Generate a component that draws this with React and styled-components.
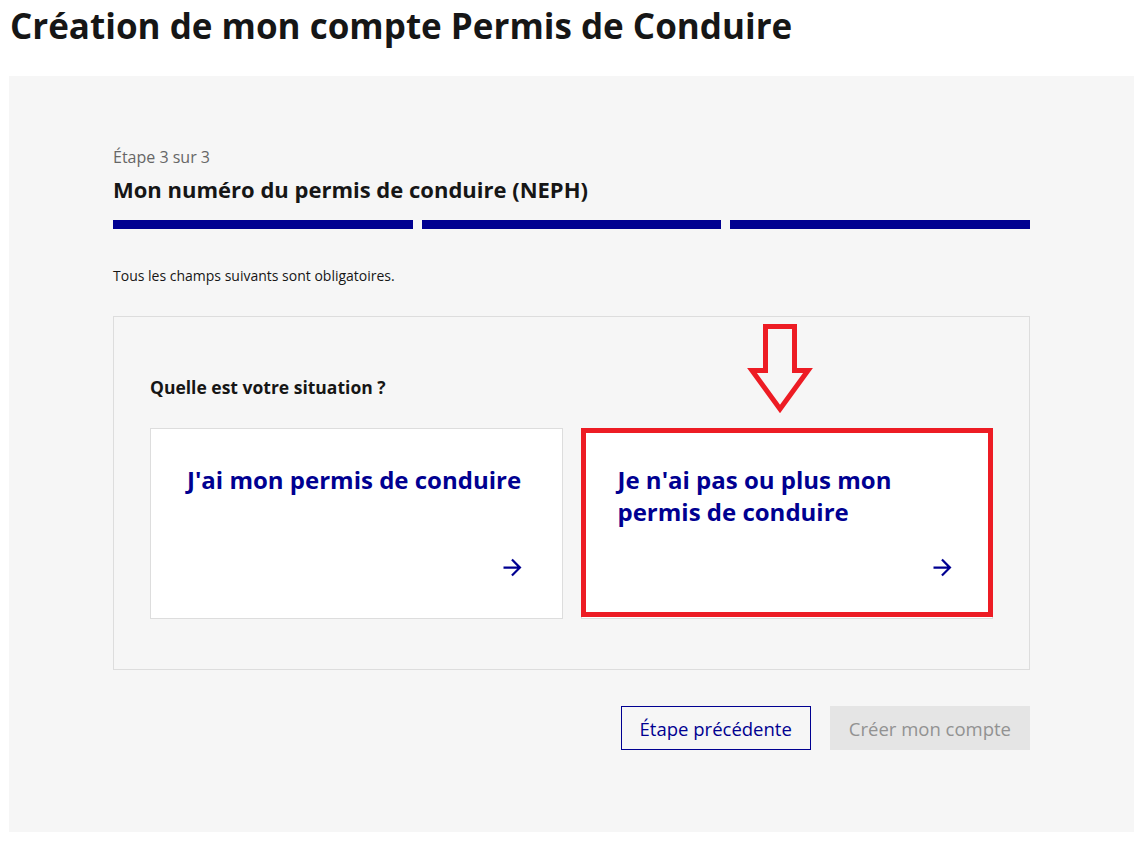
import React from "react";
import styled, { createGlobalStyle } from "styled-components";

const GlobalStyle = createGlobalStyle`
  body {
    margin: 0;
    background: #ffffff;
    font-family: "Open Sans", "Noto Sans", sans-serif;
    color: #161616;
  }
`;

const situations = [
  { id: "has", label: "J'ai mon permis de conduire" },
  { id: "hasnot", label: "Je n'ai pas ou plus mon permis de conduire", marked: true },
];

function ArrowRight() {
  return (
    <ArrowIcon viewBox="0 0 24 24" aria-hidden="true">
      <path d="M16.172 11l-5.364-5.364 1.414-1.414L20 12l-7.778 7.778-1.414-1.414L16.172 13H4v-2z" />
    </ArrowIcon>
  );
}

function App() {
  return (
    <Page>
      <GlobalStyle />
      <Title>Création de mon compte Permis de Conduire</Title>
      <Panel>
        <StepCount>Étape 3 sur 3</StepCount>
        <StepTitle>Mon numéro du permis de conduire (NEPH)</StepTitle>
        <Steps>
          <StepBar />
          <StepBar />
          <StepBar />
        </Steps>
        <Hint>Tous les champs suivants sont obligatoires.</Hint>

        <Fieldset>
          <Legend>Quelle est votre situation ?</Legend>
          <Cards>
            {situations.map((s) => (
              <CardWrap key={s.id}>
                <Card href="#">
                  <CardTitle>{s.label}</CardTitle>
                  <ArrowRight />
                </Card>
                {s.marked && (
                  <>
                    <Pointer viewBox="0 0 70 98" aria-hidden="true">
                      <polygon points="19.5,6.5 48.5,6.5 48.5,50.5 62,50.5 34,89 6,50.5 19.5,50.5" />
                    </Pointer>
                    <Highlight />
                  </>
                )}
              </CardWrap>
            ))}
          </Cards>
        </Fieldset>

        <Actions>
          <SecondaryButton>Étape précédente</SecondaryButton>
          <PrimaryButton disabled>Créer mon compte</PrimaryButton>
        </Actions>
      </Panel>
    </Page>
  );
}

export default App;

const Page = styled.div`
  padding: 0 5px 9px 9px;
`;

const Title = styled.h1`
  margin: 0 0 24px 1px;
  font-size: 35px;
  line-height: 52px;
  font-weight: 700;
  color: #161616;
`;

const Panel = styled.div`
  background: #f6f6f6;
  padding: 69px 104px 82px;
`;

const StepCount = styled.p`
  margin: 0;
  font-size: 16px;
  line-height: 24px;
  color: #666666;
`;

const StepTitle = styled.h2`
  margin: 5px 0 0;
  font-size: 22px;
  line-height: 30px;
  font-weight: 700;
  color: #161616;
`;

const Steps = styled.div`
  display: flex;
  gap: 9px;
  margin-top: 16px;
`;

const StepBar = styled.div`
  flex: 1;
  height: 9px;
  background: #000091;
`;

const Hint = styled.p`
  margin: 37px 0 0;
  font-size: 14px;
  line-height: 20px;
  color: #161616;
`;

const Fieldset = styled.div`
  margin-top: 30px;
  border: 1px solid #dddddd;
  padding: 58px 36px 50px;
`;

const Legend = styled.div`
  font-size: 17.5px;
  line-height: 24px;
  font-weight: 700;
  color: #161616;
`;

const Cards = styled.div`
  display: grid;
  grid-template-columns: 1fr 1fr;
  gap: 18px;
  margin-top: 29px;
`;

const CardWrap = styled.div`
  position: relative;
  display: flex;
`;

const Card = styled.a`
  flex: 1;
  display: flex;
  flex-direction: column;
  background: #ffffff;
  border: 1px solid #dddddd;
  padding: 35px 36px 37px;
  text-decoration: none;
`;

const CardTitle = styled.span`
  font-size: 24px;
  line-height: 32px;
  font-weight: 700;
  color: #000091;
  margin-bottom: 26px;
`;

const ArrowIcon = styled.svg`
  width: 27px;
  height: 27px;
  margin-top: auto;
  align-self: flex-end;
  fill: #000091;
`;

const Highlight = styled.div`
  position: absolute;
  top: 0;
  left: 0;
  right: 0;
  bottom: 2px;
  border: 5px solid #ed1c24;
  pointer-events: none;
`;

const Pointer = styled.svg`
  position: absolute;
  left: 165px;
  top: -108px;
  width: 70px;
  height: 98px;
  fill: none;
  stroke: #ed1c24;
  stroke-width: 5;
`;

const Actions = styled.div`
  display: flex;
  justify-content: flex-end;
  gap: 19px;
  margin-top: 36px;
`;

const Button = styled.button`
  height: 44px;
  padding: 0 18px;
  font-family: inherit;
  font-size: 18.5px;
  font-weight: 500;
  border: 1px solid transparent;
  cursor: pointer;
`;

const SecondaryButton = styled(Button)`
  background: transparent;
  border-color: #000091;
  color: #000091;
`;

const PrimaryButton = styled(Button)`
  background: #e5e5e5;
  color: #929292;
  cursor: not-allowed;
`;
